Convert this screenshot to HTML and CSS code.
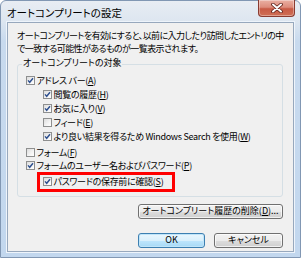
FILE: index.html
```html
<!DOCTYPE html>
<html lang="ja">
<head>
<meta charset="utf-8">
<link rel="stylesheet" href="styles.css">
</head>
<body>
<div class="window">
  <div class="titlebar">
    <span class="title">オートコンプリートの設定</span>
    <div class="close">
      <svg width="14" height="10" viewBox="0 0 14 10"><path d="M3 1.5 L11 8.5 M11 1.5 L3 8.5" stroke="#5a1e16" stroke-width="3.6" stroke-linecap="round"/><path d="M3 1.5 L11 8.5 M11 1.5 L3 8.5" stroke="#ffffff" stroke-width="2" stroke-linecap="round"/></svg>
    </div>
  </div>
  <div class="client">
    <p class="intro">オートコンプリートを有効にすると、以前に入力したり訪問したエントリの中<br>で一致する可能性があるものが一覧表示されます。</p>
    <div class="group">
      <div class="legend">オートコンプリートの対象</div>
      <ul class="opts">
        <li class="opt l1"><span class="cb"><svg width="7" height="7" viewBox="0 0 7 7"><path d="M1 3.4 L2.7 5.3 L6 1.2" stroke="#2d4f8e" stroke-width="1.4" fill="none"/></svg></span>アドレス バー(<u>A</u>)</li>
        <li class="opt l2"><span class="cb"><svg width="7" height="7" viewBox="0 0 7 7"><path d="M1 3.4 L2.7 5.3 L6 1.2" stroke="#2d4f8e" stroke-width="1.4" fill="none"/></svg></span>閲覧の履歴(<u>H</u>)</li>
        <li class="opt l2"><span class="cb"><svg width="7" height="7" viewBox="0 0 7 7"><path d="M1 3.4 L2.7 5.3 L6 1.2" stroke="#2d4f8e" stroke-width="1.4" fill="none"/></svg></span>お気に入り(<u>V</u>)</li>
        <li class="opt l2"><span class="cb"></span>フィード(<u>E</u>)</li>
        <li class="opt l2"><span class="cb"><svg width="7" height="7" viewBox="0 0 7 7"><path d="M1 3.4 L2.7 5.3 L6 1.2" stroke="#2d4f8e" stroke-width="1.4" fill="none"/></svg></span>より良い結果を得るため Windows Search を使用(<u>W</u>)</li>
        <li class="opt l1 gap"><span class="cb"></span>フォーム(<u>F</u>)</li>
        <li class="opt l1 short"><span class="cb"><svg width="7" height="7" viewBox="0 0 7 7"><path d="M1 3.4 L2.7 5.3 L6 1.2" stroke="#2d4f8e" stroke-width="1.4" fill="none"/></svg></span>フォームのユーザー名およびパスワード(<u>P</u>)</li>
        <li class="highlight">
          <div class="opt inner"><span class="cb"><svg width="7" height="7" viewBox="0 0 7 7"><path d="M1 3.4 L2.7 5.3 L6 1.2" stroke="#2d4f8e" stroke-width="1.4" fill="none"/></svg></span>パスワードの保存前に確認(<u>S</u>)</div>
        </li>
      </ul>
    </div>
    <div class="btnrow first">
      <button class="btn wide">オートコンプリート履歴の削除(<u>D</u>)...</button>
    </div>
    <div class="btnrow second">
      <button class="btn default">OK</button>
      <button class="btn cancel">キャンセル</button>
    </div>
  </div>
</div>
</body>
</html>
```
FILE: styles.css
```css
* { box-sizing: border-box; }
html, body {
  margin: 0;
  padding: 0;
  width: 301px;
  height: 258px;
  overflow: hidden;
  background: #ffffff;
}
body {
  font-family: "Noto Sans CJK JP", "Noto Sans", sans-serif;
  font-feature-settings: "palt";
  font-size: 9px;
  color: #000;
}
.window {
  width: 301px;
  height: 258px;
  border: 1px solid #8197b3;
  border-radius: 6px 6px 0 0;
  background: linear-gradient(180deg, #e8edf3 0px, #dde6f0 20px, #c8daee 40px, #c2d7ee 100%);
  display: flex;
  flex-direction: column;
}
.titlebar {
  height: 21px;
  display: flex;
  align-items: flex-start;
  padding-left: 6px;
}
.title {
  font-size: 10.5px;
  line-height: 14px;
  margin-top: 5px;
  color: #000;
}
.close {
  margin-left: auto;
  margin-right: 5px;
  margin-top: -1px;
  width: 37px;
  height: 17px;
  border: 1px solid #8a3b30;
  border-top: none;
  border-radius: 0 0 4px 4px;
  background: linear-gradient(180deg, #eab0a3 0%, #dd8c7c 45%, #c85a45 55%, #cf6f55 100%);
  display: flex;
  align-items: center;
  justify-content: center;
  box-shadow: inset 0 0 0 1px rgba(255,255,255,0.35);
}
.client {
  margin: 0 6px;
  height: 230px;
  border: 1px solid #97a8bd;
  background: #f0f0f0;
  box-shadow: 0 0 0 1px #eef4fb;
}
.intro {
  margin: 0;
  padding: 7px 0 0 9px;
  line-height: 12.5px;
  white-space: nowrap;
  letter-spacing: -0.56px;
}
.group {
  margin: 9px 10px 0 9px;
  border: 1px solid #d5dfe5;
  border-radius: 3px;
  padding-bottom: 4px;
}
.legend {
  width: fit-content;
  margin: -8px 0 0 4px;
  padding: 0 1px;
  line-height: 12px;
  background: #f0f0f0;
}
.opts {
  list-style: none;
  margin: 4px 0 0 0;
  padding: 0;
  letter-spacing: -0.3px;
}
.opt {
  height: 14px;
  display: flex;
  align-items: center;
  white-space: nowrap;
}
.l1 { padding-left: 8px; }
.l2 { padding-left: 25px; }
.gap { margin-top: 2.5px; }
.short { height: 12px; }
.cb {
  width: 9px;
  height: 9px;
  flex: none;
  border: 1px solid #8e8f8f;
  background: linear-gradient(135deg, #dcdcdc 0%, #f4f4f4 60%, #ffffff 100%);
  margin-right: 1.5px;
  display: flex;
  align-items: center;
  justify-content: center;
}
.cb svg { display: block; }
.highlight {
  margin-left: 19px;
  width: 138px;
  height: 20px;
  border: 3px solid #ff0000;
}
.inner { padding-left: 3px; }
u { text-decoration: underline; text-underline-offset: 1px; }
.btnrow {
  display: flex;
  justify-content: flex-end;
  gap: 9px;
  padding-right: 10px;
}
.btnrow.first { margin-top: 7px; }
.btnrow.second { margin-top: 14px; }
.btn {
  font-family: inherit;
  font-feature-settings: "palt";
  font-size: 9px;
  color: #000;
  height: 15px;
  line-height: 12px;
  padding: 0;
  border: 1px solid #707070;
  border-radius: 3px;
  background: linear-gradient(180deg, #f2f2f2 0%, #ebebeb 50%, #dddddd 51%, #cfcfcf 100%);
  box-shadow: inset 0 0 0 1px rgba(255,255,255,0.7);
}
.wide { width: 145px; }
.default {
  width: 67px;
  border-color: #3c7fb1;
  background: linear-gradient(180deg, #eaf6fd 0%, #d9f0fc 50%, #bee6fd 51%, #a7d9f5 100%);
  box-shadow: inset 0 0 0 1px #c0e5f9;
}
.cancel { width: 69px; }
```
